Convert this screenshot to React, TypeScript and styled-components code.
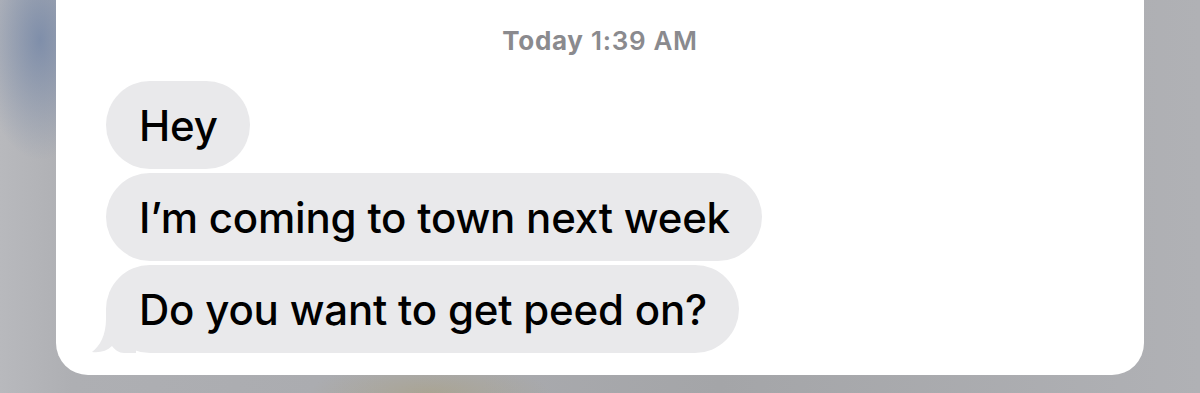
import React from "react";
import styled, { createGlobalStyle } from "styled-components";

const GlobalStyle = createGlobalStyle`
  html, body {
    margin: 0;
    padding: 0;
  }
  body {
    width: 1200px;
    height: 393px;
    overflow: hidden;
    font-family: Inter, "Liberation Sans", Arial, sans-serif;
    background:
      radial-gradient(ellipse 60px 120px at 40px 40px, rgba(110, 130, 165, 0.75), rgba(110, 130, 165, 0) 100%),
      radial-gradient(ellipse 120px 30px at 430px 393px, rgba(170, 160, 130, 0.6), rgba(170, 160, 130, 0) 100%),
      linear-gradient(to right, #b8b9bd 0%, #aeafb3 6%, #a9aaae 40%, #a4a5a8 60%, #b0b1b5 100%);
  }
`;

const Card = styled.div`
  box-sizing: border-box;
  margin: 0 56px;
  height: 375px;
  background: #ffffff;
  border-radius: 0 0 32px 32px;
  padding: 26px 0 0 50px;
  display: flex;
  flex-direction: column;
`;

const Stamp = styled.div`
  align-self: center;
  margin-left: -50px;
  font-size: 26px;
  line-height: 30px;
  font-weight: 600;
  color: #8a8a8e;
  letter-spacing: 0.7px;
  b {
    font-weight: 700;
  }
`;

const Thread = styled.div`
  margin-top: 25px;
  display: flex;
  flex-direction: column;
  align-items: flex-start;
  gap: 4px;
`;

const Bubble = styled.div`
  position: relative;
  box-sizing: border-box;
  height: 88px;
  padding: 0 32px 0 33px;
  display: flex;
  align-items: center;
  background: #e9e9eb;
  border-radius: 44px;
  font-size: 42px;
  font-weight: 500;
  color: #000000;
  letter-spacing: -0.2px;
  white-space: nowrap;
`;

const Tail = styled.svg`
  position: absolute;
  left: -14px;
  bottom: 0;
  width: 44px;
  height: 44px;
`;

const Words = styled.span`
  position: relative;
`;

export default function App() {
  return (
    <>
      <GlobalStyle />
      <Card>
        <Stamp>
          <b>Today</b> 1:39 AM
        </Stamp>
        <Thread>
          <Bubble>Hey</Bubble>
          <Bubble>I’m coming to town next week</Bubble>
          <Bubble>
            <Tail viewBox="0 0 44 44">
              <path
                d="M14 0 L44 0 L44 44 L32 44 C27 44 23 41 20 37 C15 42 8 44 0 43 C8 37 14 26 14 10 Z"
                fill="#e9e9eb"
              />
            </Tail>
            <Words>Do you want to get peed on?</Words>
          </Bubble>
        </Thread>
      </Card>
    </>
  );
}
